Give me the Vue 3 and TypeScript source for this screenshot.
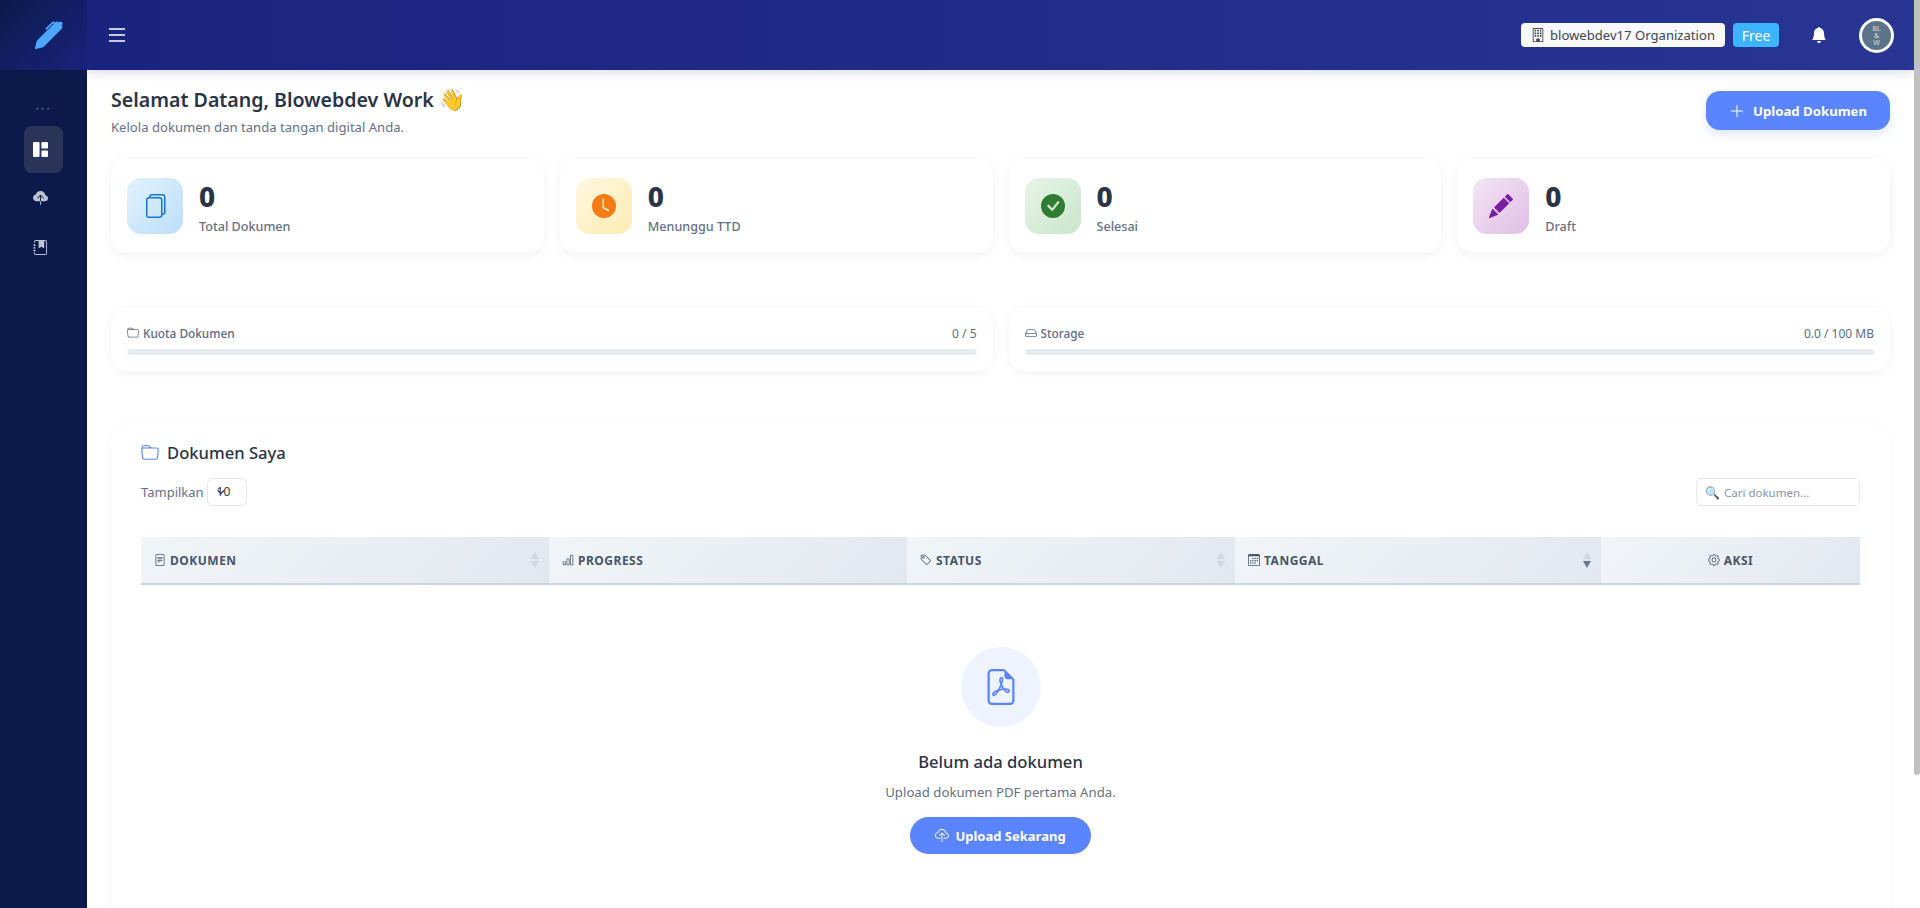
<script setup lang="ts">
import { ref } from 'vue';

type Stat = { label: string; value: number; tone: string; path: string };

const search = ref('');

const stats: Stat[] = [
  {
    label: 'Total Dokumen',
    value: 0,
    tone: 'blue',
    path: 'M13 0H6a2 2 0 0 0-2 2 2 2 0 0 0-2 2v10a2 2 0 0 0 2 2h7a2 2 0 0 0 2-2 2 2 0 0 0 2-2V2a2 2 0 0 0-2-2m0 13V4a2 2 0 0 0-2-2H5a1 1 0 0 1 1-1h7a1 1 0 0 1 1 1v10a1 1 0 0 1-1 1M3 4a1 1 0 0 1 1-1h7a1 1 0 0 1 1 1v10a1 1 0 0 1-1 1H4a1 1 0 0 1-1-1z'
  },
  {
    label: 'Menunggu TTD',
    value: 0,
    tone: 'orange',
    path: 'M16 8A8 8 0 1 1 0 8a8 8 0 0 1 16 0M8 3.5a.5.5 0 0 0-1 0V9a.5.5 0 0 0 .252.434l3.5 2a.5.5 0 0 0 .496-.868L8 8.71z'
  },
  {
    label: 'Selesai',
    value: 0,
    tone: 'green',
    path: 'M16 8A8 8 0 1 1 0 8a8 8 0 0 1 16 0m-3.97-3.03a.75.75 0 0 0-1.08.022L7.477 9.417 5.384 7.323a.75.75 0 0 0-1.06 1.06L6.97 11.03a.75.75 0 0 0 1.079-.02l3.992-4.99a.75.75 0 0 0-.01-1.05z'
  },
  {
    label: 'Draft',
    value: 0,
    tone: 'purple',
    path: 'M12.854.146a.5.5 0 0 0-.707 0L10.5 1.793 14.207 5.5l1.647-1.646a.5.5 0 0 0 0-.708zm.646 6.061L9.793 2.5 3.293 9H3.5a.5.5 0 0 1 .5.5v.5h.5a.5.5 0 0 1 .5.5v.5h.5a.5.5 0 0 1 .5.5v.5h.5a.5.5 0 0 1 .5.5v.207zm-7.468 7.468A.5.5 0 0 1 6 13.5V13h-.5a.5.5 0 0 1-.5-.5V12h-.5a.5.5 0 0 1-.5-.5V11h-.5a.5.5 0 0 1-.5-.5V10h-.5a.5.5 0 0 1-.175-.032l-.179.178a.5.5 0 0 0-.11.168l-2 5a.5.5 0 0 0 .65.65l5-2a.5.5 0 0 0 .168-.11z'
  }
];

const quotas = [
  {
    label: 'Kuota Dokumen',
    used: '0 / 5',
    path: 'M.54 3.87.5 3a2 2 0 0 1 2-2h3.672a2 2 0 0 1 1.414.586l.828.828A2 2 0 0 0 9.828 3h3.982a2 2 0 0 1 1.992 2.181l-.637 7A2 2 0 0 1 13.174 14H2.826a2 2 0 0 1-1.991-1.819l-.637-7a2 2 0 0 1 .342-1.31zM2.19 4a1 1 0 0 0-.996 1.09l.637 7a1 1 0 0 0 .995.91h10.348a1 1 0 0 0 .995-.91l.637-7A1 1 0 0 0 13.81 4zm4.69-1.707A1 1 0 0 0 6.172 2H2.5a1 1 0 0 0-1 .981l.006.139q.323-.119.684-.12h5.396z'
  },
  {
    label: 'Storage',
    used: '0.0 / 100 MB',
    path: 'M4.5 11a.5.5 0 1 0 0-1 .5.5 0 0 0 0 1M3 10.5a.5.5 0 1 1-1 0 .5.5 0 0 1 1 0M16 11a2 2 0 0 1-2 2H2a2 2 0 0 1-2-2V9.51c0-.418.105-.83.305-1.197l2.472-4.531A1.5 1.5 0 0 1 4.094 3h7.812a1.5 1.5 0 0 1 1.317.782l2.472 4.53c.2.368.305.78.305 1.198zM3.655 4.26 1.592 8.043Q1.79 8 2 8h12c.21 0 .41.043.408.042L12.345 4.26a.5.5 0 0 0-.439-.26H4.094a.5.5 0 0 0-.44.26zM1 10v1a1 1 0 0 0 1 1h12a1 1 0 0 0 1-1v-1a1 1 0 0 0-1-1H2a1 1 0 0 0-1 1'
  }
];

const columns = [
  {
    label: 'Dokumen',
    width: 408,
    sort: 'none',
    path: 'M5 4a.5.5 0 0 0 0 1h6a.5.5 0 0 0 0-1zm-.5 2.5A.5.5 0 0 1 5 6h6a.5.5 0 0 1 0 1H5a.5.5 0 0 1-.5-.5M5 8a.5.5 0 0 0 0 1h6a.5.5 0 0 0 0-1zm0 2a.5.5 0 0 0 0 1h3a.5.5 0 0 0 0-1zM2 2a2 2 0 0 1 2-2h8a2 2 0 0 1 2 2v12a2 2 0 0 1-2 2H4a2 2 0 0 1-2-2zm10-1H4a1 1 0 0 0-1 1v12a1 1 0 0 0 1 1h8a1 1 0 0 0 1-1V2a1 1 0 0 0-1-1'
  },
  {
    label: 'Progress',
    width: 358,
    sort: '',
    path: 'M4 11H2v3h2zm5-4H7v7h2zm5-5v12h-2V2zm-2-1a1 1 0 0 0-1 1v12a1 1 0 0 0 1 1h2a1 1 0 0 0 1-1V2a1 1 0 0 0-1-1zM6 7a1 1 0 0 1 1-1h2a1 1 0 0 1 1 1v7a1 1 0 0 1-1 1H7a1 1 0 0 1-1-1zm-5 4a1 1 0 0 1 1-1h2a1 1 0 0 1 1 1v3a1 1 0 0 1-1 1H2a1 1 0 0 1-1-1z'
  },
  {
    label: 'Status',
    width: 328,
    sort: 'none',
    path: 'M6 4.5a1.5 1.5 0 1 1-3 0 1.5 1.5 0 0 1 3 0m-1 0a.5.5 0 1 0-1 0 .5.5 0 0 0 1 0M2 1h4.586a1 1 0 0 1 .707.293l7 7a1 1 0 0 1 0 1.414l-4.586 4.586a1 1 0 0 1-1.414 0l-7-7A1 1 0 0 1 1 6.586V2a1 1 0 0 1 1-1m0 5.586 7 7L13.586 9l-7-7H2z'
  },
  {
    label: 'Tanggal',
    width: 366,
    sort: 'desc',
    path: 'M14 0H2a2 2 0 0 0-2 2v12a2 2 0 0 0 2 2h12a2 2 0 0 0 2-2V2a2 2 0 0 0-2-2M1 3.857C1 3.384 1.448 3 2 3h12c.552 0 1 .384 1 .857v10.286c0 .473-.448.857-1 .857H2c-.552 0-1-.384-1-.857zM6.5 7a1 1 0 1 0 0-2 1 1 0 0 0 0 2m3 0a1 1 0 1 0 0-2 1 1 0 0 0 0 2m3 0a1 1 0 1 0 0-2 1 1 0 0 0 0 2m-9 3a1 1 0 1 0 0-2 1 1 0 0 0 0 2m3 0a1 1 0 1 0 0-2 1 1 0 0 0 0 2m3 0a1 1 0 1 0 0-2 1 1 0 0 0 0 2m3 0a1 1 0 1 0 0-2 1 1 0 0 0 0 2m-9 3a1 1 0 1 0 0-2 1 1 0 0 0 0 2m3 0a1 1 0 1 0 0-2 1 1 0 0 0 0 2m3 0a1 1 0 1 0 0-2 1 1 0 0 0 0 2'
  },
  {
    label: 'Aksi',
    width: 259,
    sort: '',
    path: 'M8 4.754a3.246 3.246 0 1 0 0 6.492 3.246 3.246 0 0 0 0-6.492M5.754 8a2.246 2.246 0 1 1 4.492 0 2.246 2.246 0 0 1-4.492 0M9.796 1.343c-.527-1.79-3.065-1.79-3.592 0l-.094.319a.873.873 0 0 1-1.255.52l-.292-.16c-1.64-.892-3.433.902-2.54 2.541l.159.292a.873.873 0 0 1-.52 1.255l-.319.094c-1.79.527-1.79 3.065 0 3.592l.319.094a.873.873 0 0 1 .52 1.255l-.16.292c-.892 1.64.901 3.434 2.541 2.54l.292-.159a.873.873 0 0 1 1.255.52l.094.319c.527 1.79 3.065 1.79 3.592 0l.094-.319a.873.873 0 0 1 1.255-.52l.292.16c1.64.893 3.434-.902 2.54-2.541l-.159-.292a.873.873 0 0 1 .52-1.255l.319-.094c1.79-.527 1.79-3.065 0-3.592l-.319-.094a.873.873 0 0 1-.52-1.255l.16-.292c.893-1.64-.902-3.433-2.541-2.54l-.292.159a.873.873 0 0 1-1.255-.52zm-2.633.283c.246-.835 1.428-.835 1.674 0l.094.319a1.873 1.873 0 0 0 2.693 1.115l.291-.16c.764-.415 1.6.42 1.184 1.185l-.159.292a1.873 1.873 0 0 0 1.116 2.692l.318.094c.835.246.835 1.428 0 1.674l-.319.094a1.873 1.873 0 0 0-1.115 2.693l.16.291c.415.764-.42 1.6-1.185 1.184l-.291-.159a1.873 1.873 0 0 0-2.693 1.116l-.094.318c-.246.835-1.428.835-1.674 0l-.094-.319a1.873 1.873 0 0 0-2.692-1.115l-.292.16c-.764.415-1.6-.42-1.184-1.185l.159-.291A1.873 1.873 0 0 0 1.945 8.93l-.319-.094c-.835-.246-.835-1.428 0-1.674l.319-.094A1.873 1.873 0 0 0 3.06 4.377l-.16-.292c-.415-.764.42-1.6 1.185-1.184l.292.159a1.873 1.873 0 0 0 2.692-1.115z'
  }
];

const navItems = [
  {
    active: true,
    path: 'M0 1a1 1 0 0 1 1-1h5a1 1 0 0 1 1 1v14a1 1 0 0 1-1 1H1a1 1 0 0 1-1-1zm9 0a1 1 0 0 1 1-1h5a1 1 0 0 1 1 1v5a1 1 0 0 1-1 1h-5a1 1 0 0 1-1-1zm0 9a1 1 0 0 1 1-1h5a1 1 0 0 1 1 1v5a1 1 0 0 1-1 1h-5a1 1 0 0 1-1-1z'
  },
  {
    active: false,
    path: 'M8 0a5.53 5.53 0 0 0-3.594 1.342c-.766.66-1.321 1.52-1.464 2.383C1.266 4.095 0 5.555 0 7.318 0 9.366 1.708 11 3.781 11H7.5V5.707L5.354 7.854a.5.5 0 1 1-.708-.708l3-3a.5.5 0 0 1 .708 0l3 3a.5.5 0 0 1-.708.708L8.5 5.707V11h4.188C14.502 11 16 9.57 16 7.773c0-1.636-1.242-2.969-2.834-3.194C12.923 1.999 10.69 0 8 0m-.5 14.5V11h1v3.5a.5.5 0 0 1-1 0'
  },
  {
    active: false,
    path: 'M6 1h6v7a.5.5 0 0 1-.757.429L9 7.083 6.757 8.43A.5.5 0 0 1 6 8zM3 0h10a2 2 0 0 1 2 2v12a2 2 0 0 1-2 2H3a2 2 0 0 1-2-2v-1h1v1a1 1 0 0 0 1 1h10a1 1 0 0 0 1-1V2a1 1 0 0 0-1-1H3a1 1 0 0 0-1 1v1H1V2a2 2 0 0 1 2-2M1 5v-.5a.5.5 0 0 1 1 0V5h.5a.5.5 0 0 1 0 1h-2a.5.5 0 0 1 0-1zm0 3v-.5a.5.5 0 0 1 1 0V8h.5a.5.5 0 0 1 0 1h-2a.5.5 0 0 1 0-1zm0 3v-.5a.5.5 0 0 1 1 0v.5h.5a.5.5 0 0 1 0 1h-2a.5.5 0 0 1 0-1z'
  }
];

const cloudUpload = 'M4.406 1.342A5.53 5.53 0 0 1 8 0c2.69 0 4.923 2 5.166 4.579C14.758 4.804 16 6.137 16 7.773 16 9.569 14.502 11 12.687 11H10a.5.5 0 0 1 0-1h2.688C13.979 10 15 8.988 15 7.773c0-1.216-1.02-2.228-2.313-2.228h-.5v-.5C12.188 2.825 10.328 1 8 1a4.53 4.53 0 0 0-2.941 1.1c-.757.652-1.153 1.438-1.153 2.055v.448l-.445.049C2.064 4.805 1 5.952 1 7.318 1 8.785 2.23 10 3.781 10H6a.5.5 0 0 1 0 1H3.781C1.708 11 0 9.366 0 7.318c0-1.763 1.266-3.223 2.942-3.593.143-.863.698-1.723 1.464-2.383M7.646 4.146a.5.5 0 0 1 .708 0l3 3a.5.5 0 0 1-.708.708L8.5 5.707V14.5a.5.5 0 0 1-1 0V5.707L5.354 7.854a.5.5 0 1 1-.708-.708z';
const folder = quotas[0].path;
</script>

<template>
  <div class="layout">
    <aside class="sidebar">
      <div class="brand">
        <svg class="brand-icon" viewBox="0 0 16 16"><path d="m13.498.795.149-.149a1.207 1.207 0 1 1 1.707 1.708l-.149.148a1.5 1.5 0 0 1-.059 2.059L4.854 14.854a.5.5 0 0 1-.233.131l-4 1a.5.5 0 0 1-.606-.606l1-4a.5.5 0 0 1 .131-.232l9.642-9.642a.5.5 0 0 0-.642.056L6.854 4.854a.5.5 0 1 1-.708-.708L9.44.854A1.5 1.5 0 0 1 11.5.796a1.5 1.5 0 0 1 1.998-.001" /></svg>
      </div>
      <nav class="nav">
        <div class="nav-dots">...</div>
        <a v-for="(item, i) in navItems" :key="i" class="nav-item" :class="{ active: item.active }">
          <svg viewBox="0 0 16 16"><path :d="item.path" /></svg>
        </a>
      </nav>
    </aside>

    <div class="page">
      <header class="topbar">
        <svg class="burger" viewBox="0 0 16 16"><path d="M2.5 12a.5.5 0 0 1 .5-.5h10a.5.5 0 0 1 0 1H3a.5.5 0 0 1-.5-.5m0-4a.5.5 0 0 1 .5-.5h10a.5.5 0 0 1 0 1H3a.5.5 0 0 1-.5-.5m0-4a.5.5 0 0 1 .5-.5h10a.5.5 0 0 1 0 1H3a.5.5 0 0 1-.5-.5" /></svg>
        <div class="topbar-right">
          <span class="org">
            <svg viewBox="0 0 16 16"><path d="M4 2.5a.5.5 0 0 1 .5-.5h1a.5.5 0 0 1 .5.5v1a.5.5 0 0 1-.5.5h-1a.5.5 0 0 1-.5-.5zm3 0a.5.5 0 0 1 .5-.5h1a.5.5 0 0 1 .5.5v1a.5.5 0 0 1-.5.5h-1a.5.5 0 0 1-.5-.5zm3.5-.5a.5.5 0 0 0-.5.5v1a.5.5 0 0 0 .5.5h1a.5.5 0 0 0 .5-.5v-1a.5.5 0 0 0-.5-.5zM4 5.5a.5.5 0 0 1 .5-.5h1a.5.5 0 0 1 .5.5v1a.5.5 0 0 1-.5.5h-1a.5.5 0 0 1-.5-.5zM7.5 5a.5.5 0 0 0-.5.5v1a.5.5 0 0 0 .5.5h1a.5.5 0 0 0 .5-.5v-1a.5.5 0 0 0-.5-.5zm2.5.5a.5.5 0 0 1 .5-.5h1a.5.5 0 0 1 .5.5v1a.5.5 0 0 1-.5.5h-1a.5.5 0 0 1-.5-.5zM4.5 8a.5.5 0 0 0-.5.5v1a.5.5 0 0 0 .5.5h1a.5.5 0 0 0 .5-.5v-1a.5.5 0 0 0-.5-.5zm2.5.5a.5.5 0 0 1 .5-.5h1a.5.5 0 0 1 .5.5v1a.5.5 0 0 1-.5.5h-1a.5.5 0 0 1-.5-.5zm3.5-.5a.5.5 0 0 0-.5.5v1a.5.5 0 0 0 .5.5h1a.5.5 0 0 0 .5-.5v-1a.5.5 0 0 0-.5-.5zM2 1a1 1 0 0 1 1-1h10a1 1 0 0 1 1 1v14a1 1 0 0 1-1 1H3a1 1 0 0 1-1-1zm11 0H3v14h3v-2.5a.5.5 0 0 1 .5-.5h3a.5.5 0 0 1 .5.5V15h3z" /></svg>
            blowebdev17 Organization
          </span>
          <span class="plan">Free</span>
          <svg class="bell" viewBox="0 0 16 16"><path d="M8 16a2 2 0 0 0 2-2H6a2 2 0 0 0 2 2m.995-14.901a1 1 0 1 0-1.99 0A5 5 0 0 0 3 6c0 1.098-.5 6-2 7h14c-1.5-1-2-5.902-2-7 0-2.42-1.72-4.44-4.005-4.901" /></svg>
          <div class="avatar">
            <span>BL<br />&amp;<br />W</span>
          </div>
        </div>
      </header>

      <main class="content">
        <section class="welcome">
          <div>
            <h1>Selamat Datang, Blowebdev Work <span class="wave">👋</span></h1>
            <p>Kelola dokumen dan tanda tangan digital Anda.</p>
          </div>
          <button class="btn btn-top">
            <svg viewBox="0 0 16 16"><path d="M8 2a.5.5 0 0 1 .5.5v5h5a.5.5 0 0 1 0 1h-5v5a.5.5 0 0 1-1 0v-5h-5a.5.5 0 0 1 0-1h5v-5A.5.5 0 0 1 8 2" /></svg>
            Upload Dokumen
          </button>
        </section>

        <section class="stats">
          <div v-for="s in stats" :key="s.label" class="card stat">
            <div class="stat-icon" :class="s.tone">
              <svg viewBox="0 0 16 16"><path :d="s.path" /></svg>
            </div>
            <div>
              <div class="stat-value">{{ s.value }}</div>
              <div class="stat-label">{{ s.label }}</div>
            </div>
          </div>
        </section>

        <section class="quotas">
          <div v-for="q in quotas" :key="q.label" class="card quota">
            <div class="quota-head">
              <span class="quota-label"><svg viewBox="0 0 16 16"><path :d="q.path" /></svg>{{ q.label }}</span>
              <span class="quota-used">{{ q.used }}</span>
            </div>
            <div class="bar"></div>
          </div>
        </section>

        <section class="card docs">
          <h2>
            <svg viewBox="0 0 16 16"><path :d="folder" /></svg>
            Dokumen Saya
          </h2>
          <div class="toolbar">
            <label class="length">
              Tampilkan
              <span class="select">10<svg viewBox="0 0 16 16"><path fill="none" stroke="#343a40" stroke-linecap="round" stroke-linejoin="round" stroke-width="2.4" d="m2 5 6 6 6-6" /></svg></span>
            </label>
            <label class="search">
              <span class="lens">🔍</span>
              <input v-model="search" type="text" placeholder="Cari dokumen..." />
            </label>
          </div>

          <div class="table-head">
            <div
              v-for="col in columns"
              :key="col.label"
              class="th"
              :class="{ center: col.label === 'Aksi' }"
              :style="{ width: col.width + 'px' }"
            >
              <svg class="th-icon" viewBox="0 0 16 16"><path :d="col.path" /></svg>
              <span>{{ col.label }}</span>
              <span v-if="col.sort" class="sort" :class="col.sort">
                <i class="up"></i>
                <i class="down"></i>
              </span>
            </div>
          </div>

          <div class="empty">
            <div class="empty-icon">
              <svg viewBox="0 0 16 16"><path d="M14 14V4.5L9.5 0H4a2 2 0 0 0-2 2v12a2 2 0 0 0 2 2h8a2 2 0 0 0 2-2M9.5 3A1.5 1.5 0 0 0 11 4.5h2V14a1 1 0 0 1-1 1H4a1 1 0 0 1-1-1V2a1 1 0 0 1 1-1h5.5z" /><path d="M4.603 12.087a.8.8 0 0 1-.438-.42c-.195-.388-.13-.776.08-1.102.198-.307.526-.568.897-.787a7.7 7.7 0 0 1 1.482-.645 20 20 0 0 0 1.062-2.227 7.3 7.3 0 0 1-.43-1.295c-.086-.4-.119-.796-.046-1.136.075-.354.274-.672.65-.823.192-.077.4-.12.602-.077a.7.7 0 0 1 .477.365c.088.164.12.356.127.538.007.187-.012.395-.047.614-.084.51-.27 1.134-.52 1.794a11 11 0 0 0 .98 1.686 5.8 5.8 0 0 1 1.334.05c.364.065.734.195.96.465.12.144.193.32.2.518.007.192-.047.382-.138.563a1.04 1.04 0 0 1-.354.416.86.86 0 0 1-.51.138c-.331-.014-.654-.196-.933-.417a5.7 5.7 0 0 1-.911-.95 11.6 11.6 0 0 0-1.997.406 11.3 11.3 0 0 1-1.021 1.51c-.29.35-.608.655-.926.787a.8.8 0 0 1-.58.029m1.379-1.901q-.25.115-.459.238c-.328.194-.541.383-.647.547-.094.145-.096.25-.04.361q.016.032.026.044l.035-.012c.137-.056.355-.235.635-.572a8 8 0 0 0 .45-.606m1.64-1.33a13 13 0 0 1 1.01-.193 12 12 0 0 1-.51-.858 21 21 0 0 1-.5 1.05zm2.446.45q.226.244.435.41c.24.19.407.253.498.256a.1.1 0 0 0 .07-.015.3.3 0 0 0 .094-.125.44.44 0 0 0 .059-.2.1.1 0 0 0-.026-.063c-.052-.062-.2-.152-.518-.209a4 4 0 0 0-.612-.053zM8.078 5.8a7 7 0 0 0 .2-.828q.046-.282.038-.465a.6.6 0 0 0-.032-.198.5.5 0 0 0-.145.04c-.087.035-.158.106-.196.283-.04.192-.03.469.046.822q.036.167.09.346z" /></svg>
            </div>
            <h3>Belum ada dokumen</h3>
            <p>Upload dokumen PDF pertama Anda.</p>
            <button class="btn btn-empty">
              <svg viewBox="0 0 16 16"><path :d="cloudUpload" /></svg>
              Upload Sekarang
            </button>
          </div>
        </section>
      </main>
    </div>

    <div class="scroll-thumb"></div>
  </div>
</template>

<style scoped>
.layout {
  display: flex;
  min-height: 1066px;
  font-family: "Noto Sans", "Open Sans", sans-serif;
  color: #2b3445;
  background: #fff;
}

svg {
  fill: currentColor;
  display: block;
  flex: none;
}

.scroll-thumb {
  position: fixed;
  top: 0;
  right: 0;
  width: 6px;
  height: 775px;
  background: #c1c1c1;
  border-radius: 0 0 3px 3px;
  z-index: 10;
}

.sidebar {
  width: 87px;
  flex: none;
  background: #0c1a4b;
  position: sticky;
  top: 0;
  height: 908px;
}

.brand {
  height: 70px;
  background: linear-gradient(135deg, #0a1a4a, #1a237e);
  display: flex;
  align-items: center;
  justify-content: center;
  padding-left: 11px;
}

.brand-icon {
  width: 28px;
  height: 28px;
  color: #4da6ff;
}

.nav {
  display: flex;
  flex-direction: column;
  align-items: center;
}

.nav-dots {
  height: 56px;
  padding-top: 27px;
  box-sizing: border-box;
  color: #3f4a6e;
  font-size: 14px;
  font-weight: 700;
  line-height: 16px;
  letter-spacing: 1.5px;
}

.nav-item {
  width: 39px;
  height: 47px;
  box-sizing: border-box;
  padding-left: 9px;
  margin-bottom: 2px;
  border-radius: 8px;
  display: flex;
  align-items: center;
  color: #bcc3d2;
}

.nav-item svg {
  width: 15px;
  height: 15px;
}

.nav-item.active {
  background: #2a3459;
  color: #fff;
}

.page {
  flex: 1;
  min-width: 0;
  padding-right: 6px;
}

.topbar {
  height: 70px;
  position: sticky;
  top: 0;
  z-index: 5;
  display: flex;
  align-items: center;
  justify-content: space-between;
  padding: 0 20px 0 18px;
  color: #fff;
  background: linear-gradient(90deg, #1a237e, #283593);
  box-shadow: 0 2px 10px rgba(26, 35, 126, 0.18);
}

.burger {
  width: 24px;
  height: 24px;
}

.topbar-right {
  display: flex;
  align-items: center;
}

.org {
  height: 24px;
  padding: 0 10px;
  display: flex;
  align-items: center;
  gap: 5px;
  border-radius: 4px;
  background: #f8f9fa;
  color: #40464d;
  font-size: 13.1px;
}

.org svg {
  width: 14px;
  height: 16px;
}

.plan {
  height: 24px;
  width: 46px;
  margin-left: 8px;
  display: flex;
  align-items: center;
  justify-content: center;
  border-radius: 4px;
  background: #3db4ff;
  font-size: 14px;
}

.bell {
  width: 16px;
  height: 16px;
  margin: 0 32px;
}

.avatar {
  width: 35px;
  height: 35px;
  box-sizing: border-box;
  border: 3px solid #f6f8fa;
  border-radius: 50%;
  background: #5d7389;
  display: flex;
  align-items: center;
  justify-content: center;
  font-size: 7px;
  line-height: 7px;
  text-align: center;
  color: #d9e0e6;
}

.content {
  padding: 16px 24px 0;
}

.welcome {
  display: flex;
  justify-content: space-between;
  align-items: flex-start;
  height: 73px;
}

h1 {
  margin: 0;
  font-size: 19.6px;
  line-height: 27px;
  font-weight: 600;
  color: #2b3445;
}

.wave {
  font-size: 21px;
}

.welcome p {
  margin: 5px 0 0;
  font-size: 13.1px;
  line-height: 18px;
  color: #667085;
}

.btn {
  border: 0;
  color: #fff;
  background: #5b84ff;
  font-family: inherit;
  font-weight: 700;
  display: flex;
  align-items: center;
  justify-content: center;
}

.btn-top {
  width: 184px;
  height: 39px;
  margin-top: 5px;
  border-radius: 14px;
  gap: 8px;
  font-size: 13.2px;
  box-shadow: 0 4px 10px rgba(91, 132, 255, 0.2);
}

.btn-top svg {
  width: 16px;
  height: 16px;
}

.card {
  background: #fff;
  border-radius: 16px;
  box-shadow: 0 2px 12px rgba(0, 0, 0, 0.06);
}

.stats {
  display: grid;
  grid-template-columns: repeat(4, 1fr);
  gap: 16px;
}

.stat {
  height: 94px;
  box-sizing: border-box;
  padding: 19px 16px;
  display: flex;
  gap: 16px;
}

.stat-icon {
  width: 56px;
  height: 56px;
  flex: none;
  border-radius: 14px;
  display: flex;
  align-items: center;
  justify-content: center;
}

.stat-icon svg {
  width: 24px;
  height: 24px;
}

.stat-icon.blue {
  background: linear-gradient(135deg, #e3f2fd, #bbdefb);
  color: #1976d2;
}

.stat-icon.orange {
  background: linear-gradient(135deg, #fff8e1, #ffecb3);
  color: #f57c14;
}

.stat-icon.green {
  background: linear-gradient(135deg, #e8f5e9, #c8e6c9);
  color: #2e7d32;
}

.stat-icon.purple {
  background: linear-gradient(135deg, #f3e5f5, #e1bee7);
  color: #7b1fa2;
}

.stat-value {
  font-size: 28px;
  line-height: 38px;
  font-weight: 800;
  color: #2b3445;
  margin-top: -1px;
}

.stat-label {
  font-size: 12.6px;
  line-height: 18px;
  font-weight: 500;
  color: #667085;
  margin-top: 3px;
}

.quotas {
  display: grid;
  grid-template-columns: 1fr 1fr;
  gap: 16px;
  margin-top: 54px;
}

.quota {
  height: 64px;
  box-sizing: border-box;
  padding: 18px 16px 0;
  box-shadow: 0 2px 12px rgba(0, 0, 0, 0.05);
}

.quota-head {
  display: flex;
  justify-content: space-between;
  align-items: center;
  height: 16px;
  font-size: 12px;
  color: #5d6b82;
}

.quota-label {
  display: flex;
  align-items: center;
  gap: 4px;
  font-size: 11.8px;
  font-weight: 500;
}

.quota-label svg {
  width: 12px;
  height: 12px;
}

.bar {
  height: 6px;
  margin-top: 8px;
  border-radius: 3px;
  background: #e9ecef;
}

.docs {
  margin-top: 54px;
  padding: 16px 30px 0;
  min-height: 570px;
  box-sizing: border-box;
  box-shadow: 0 2px 12px rgba(0, 0, 0, 0.03);
}

.docs h2 {
  margin: 0;
  display: flex;
  align-items: center;
  gap: 8px;
  font-size: 16.6px;
  line-height: 24px;
  font-weight: 500;
  color: #2b3445;
}

.docs h2 svg {
  width: 18px;
  height: 18px;
  color: #5b84ff;
}

.toolbar {
  display: flex;
  justify-content: space-between;
  margin-top: 13px;
}

.length {
  display: flex;
  align-items: center;
  gap: 3px;
  font-size: 13px;
  color: #667085;
}

.select {
  width: 40px;
  height: 28px;
  box-sizing: border-box;
  border: 1px solid #e4e7f2;
  border-radius: 6px;
  position: relative;
  padding-left: 9px;
  line-height: 26px;
  font-size: 12px;
  color: #343a40;
}

.select svg {
  position: absolute;
  left: 9px;
  top: 9px;
  width: 8px;
  height: 8px;
}

.search {
  width: 164px;
  height: 28px;
  box-sizing: border-box;
  border: 1px solid #e4e7f2;
  border-radius: 6px;
  padding-left: 8px;
  display: flex;
  align-items: center;
  gap: 4px;
}

.lens {
  font-size: 12px;
}

.search input {
  width: 120px;
  border: 0;
  outline: 0;
  padding: 0;
  font-family: inherit;
  font-size: 11.5px;
}

.search input::placeholder {
  color: #8a93a3;
}

.table-head {
  display: flex;
  margin-top: 31px;
  border-bottom: 2px solid #cbd5e1;
}

.th {
  height: 46px;
  box-sizing: border-box;
  padding-left: 13px;
  display: flex;
  align-items: center;
  gap: 4px;
  position: relative;
  background: linear-gradient(135deg, #f1f5f9, #e2e8f0);
  font-size: 12px;
  font-weight: 700;
  letter-spacing: 0.5px;
  text-transform: uppercase;
  color: #475569;
}

.th.center {
  justify-content: center;
  padding-left: 0;
}

.th-icon {
  width: 12px;
  height: 12px;
}

.sort {
  position: absolute;
  right: 10px;
  top: 50%;
  margin-top: -8px;
  display: flex;
  flex-direction: column;
  gap: 2px;
}

.sort i {
  display: block;
  width: 0;
  height: 0;
  border-left: 4px solid transparent;
  border-right: 4px solid transparent;
}

.sort .up {
  border-bottom: 7px solid #cfd6e0;
}

.sort .down {
  border-top: 7px solid #cfd6e0;
}

.sort.desc .down {
  border-top-color: #6b7a8d;
}

.empty {
  display: flex;
  flex-direction: column;
  align-items: center;
  padding-top: 62px;
}

.empty-icon {
  width: 80px;
  height: 80px;
  border-radius: 50%;
  background: #eff3ff;
  color: #5b84ff;
  display: flex;
  align-items: center;
  justify-content: center;
}

.empty-icon svg {
  width: 36px;
  height: 36px;
}

.empty h3 {
  margin: 23px 0 0;
  font-size: 16.6px;
  line-height: 24px;
  font-weight: 500;
  color: #2b3445;
}

.empty p {
  margin: 8px 0 0;
  font-size: 13.2px;
  line-height: 20px;
  color: #667085;
}

.btn-empty {
  width: 181px;
  height: 37px;
  margin-top: 15px;
  border-radius: 19px;
  gap: 6px;
  font-size: 13px;
}

.btn-empty svg {
  width: 14px;
  height: 14px;
}
</style>

<style>
html {
  overflow-y: scroll;
}
</style>
